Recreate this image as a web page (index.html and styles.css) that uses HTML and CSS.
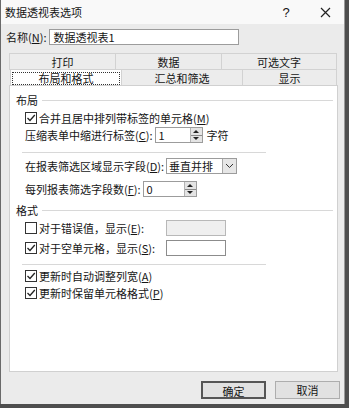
FILE: index.html
```html
<!DOCTYPE html>
<html lang="zh-CN">
<head>
    <meta charset="UTF-8">
    <title>数据透视表选项</title>
    <link rel="stylesheet" href="styles.css">
</head>
<body>
    <div class="dialog">
        <div class="titlebar">
            <span class="title">数据透视表选项</span>
            <span class="tb-btn help">?</span>
            <span class="tb-btn close">
                <svg width="11" height="11" viewBox="0 0 11 11"><path d="M1 1L10 10M10 1L1 10" stroke="#222" stroke-width="1.2" fill="none"/></svg>
            </span>
        </div>

        <div class="name-row">
            <label>名称(<u>N</u>):</label>
            <input class="text-input name-input" type="text" value="数据透视表1">
        </div>

        <div class="tabs">
            <div class="tab-row top">
                <div class="tab">打印</div>
                <div class="tab">数据</div>
                <div class="tab">可选文字</div>
            </div>
            <div class="tab-row bottom">
                <div class="tab selected"><span class="focus">布局和格式</span></div>
                <div class="tab">汇总和筛选</div>
                <div class="tab">显示</div>
            </div>
        </div>

        <div class="panel">
            <div class="group-head">布局</div>

            <div class="row r1">
                <span class="check on"><svg width="10" height="10" viewBox="0 0 10 10"><path d="M1.5 5L4 7.5L8.8 2" stroke="#222" stroke-width="1.3" fill="none"/></svg></span>
                <span>合并且居中排列带标签的单元格(<u>M</u>)</span>
            </div>
            <div class="row r2">
                <span>压缩表单中缩进行标签(<u>C</u>):</span>
                <span class="spin-field f-indent">
                    <span class="spin-value">1</span>
                    <span class="spin"><i class="up"></i><i class="down"></i></span>
                </span>
                <span class="unit">字符</span>
            </div>

            <div class="sep s1"></div>

            <div class="row r3">
                <span>在报表筛选区域显示字段(<u>D</u>):</span>
                <span class="select">
                    <span class="select-value">垂直并排</span>
                    <span class="drop"><svg width="9" height="6" viewBox="0 0 9 6"><path d="M1 1L4.5 4.5L8 1" stroke="#333" stroke-width="1" fill="none"/></svg></span>
                </span>
            </div>
            <div class="row r4">
                <span>每列报表筛选字段数(<u>F</u>):</span>
                <span class="spin-field f-count">
                    <span class="spin-value">0</span>
                    <span class="spin"><i class="up"></i><i class="down"></i></span>
                </span>
            </div>

            <div class="group-head g2">格式</div>

            <div class="row r5">
                <span class="check"></span>
                <span>对于错误值，显示(<u>E</u>):</span>
                <span class="box disabled"></span>
            </div>
            <div class="row r6">
                <span class="check on"><svg width="10" height="10" viewBox="0 0 10 10"><path d="M1.5 5L4 7.5L8.8 2" stroke="#222" stroke-width="1.3" fill="none"/></svg></span>
                <span>对于空单元格，显示(<u>S</u>):</span>
                <span class="box"></span>
            </div>

            <div class="sep s2"></div>

            <div class="row r7">
                <span class="check on"><svg width="10" height="10" viewBox="0 0 10 10"><path d="M1.5 5L4 7.5L8.8 2" stroke="#222" stroke-width="1.3" fill="none"/></svg></span>
                <span>更新时自动调整列宽(<u>A</u>)</span>
            </div>
            <div class="row r8">
                <span class="check on"><svg width="10" height="10" viewBox="0 0 10 10"><path d="M1.5 5L4 7.5L8.8 2" stroke="#222" stroke-width="1.3" fill="none"/></svg></span>
                <span>更新时保留单元格格式(<u>P</u>)</span>
            </div>
        </div>

        <div class="buttons">
            <button class="btn default">确定</button>
            <button class="btn">取消</button>
        </div>
    </div>
</body>
</html>
```

FILE: styles.css
```css
body {
    margin: 0;
    background-color: #4e4e4e;
    font-family: "Noto Sans CJK SC", sans-serif;
    font-size: 11px;
    color: #151515;
    height: 408px;
    overflow: hidden;
}

u {
    text-decoration: underline;
    text-underline-offset: 1px;
}

/* Dialog frame */
.dialog {
    width: 345px;
    height: 404px;
    background-color: #ebebeb;
    border-left: 1px solid #6a6a6a;
    border-right: 1px solid #9a9a9a;
    box-sizing: border-box;
    display: flex;
    flex-direction: column;
}

.titlebar {
    height: 24px;
    background-color: #f9f9f9;
    display: flex;
    align-items: center;
    padding-left: 4px;
    padding-right: 4px;
}

.title {
    font-size: 11px;
}

.tb-btn {
    display: flex;
    align-items: center;
    justify-content: center;
    height: 24px;
}

.help {
    margin-left: auto;
    width: 20px;
    font-family: "Liberation Sans", sans-serif;
    font-size: 13px;
}

.close {
    width: 30px;
    margin-left: 14px;
}

/* Name row */
.name-row {
    display: flex;
    align-items: center;
    margin-top: 5px;
    padding-left: 5px;
    height: 16px;
}

.text-input {
    font: inherit;
    color: inherit;
    border: 1px solid #9c9c9c;
    background-color: #fff;
    box-sizing: border-box;
    height: 16px;
    padding: 0 3px;
    margin: 0;
}

.name-input {
    width: 190px;
    margin-left: 3px;
}

/* Tabs */
.tabs {
    margin-top: 8px;
    margin-left: 8px;
    width: 328px;
}

.tab-row {
    display: grid;
    height: 16px;
}

.tab-row.top {
    grid-template-columns: 107px 106px 1fr;
}

.tab-row.bottom {
    grid-template-columns: 113px 121px 1fr;
}

.tab {
    display: flex;
    align-items: center;
    justify-content: center;
    background-color: #ececec;
    border: 1px solid #d2d2d2;
    border-left: none;
    border-bottom: none;
    box-sizing: border-box;
}

.tab:first-child {
    border-left: 1px solid #d2d2d2;
}

.tab.selected {
    background-color: #fff;
    margin-left: 1px;
}

.focus {
    display: flex;
    align-items: center;
    justify-content: center;
    width: 108px;
    height: 13px;
    border: 1px dotted #333;
    box-sizing: border-box;
}

/* Panel */
.panel {
    margin-left: 8px;
    width: 329px;
    height: 287px;
    background-color: #fff;
    border: 1px solid #d0d0d0;
    box-sizing: border-box;
    padding: 7px 4px 0 6px;
}

.group-head {
    display: flex;
    align-items: center;
    height: 14px;
}

.group-head::after {
    content: "";
    flex: 1;
    height: 1px;
    background-color: #d8d8d8;
    margin-left: 4px;
}

.g2 { margin-top: 6px; }

.row {
    display: flex;
    align-items: center;
    margin-left: 9px;
    height: 14px;
}

.r1 { margin-top: 4px; }
.r2 { margin-top: 2px; height: 16px; }
.r3 { margin-top: 5px; height: 16px; }
.r4 { margin-top: 7px; height: 16px; }
.r5 { margin-top: 3px; height: 16px; }
.r6 { margin-top: 4px; height: 16px; }
.r7 { margin-top: 4px; }
.r8 { margin-top: 3px; }

.sep {
    height: 1px;
    background-color: #d8d8d8;
    margin-left: 6px;
    width: 244px;
}

.s1 { margin-top: 9px; }
.s2 { margin-top: 8px; }

/* Checkbox */
.check {
    width: 12px;
    height: 12px;
    border: 1px solid #333;
    box-sizing: border-box;
    background-color: #fff;
    display: flex;
    align-items: center;
    justify-content: center;
    margin-right: 2px;
}

/* Spin fields */
.spin-field {
    display: flex;
    height: 16px;
    border: 1px solid #9c9c9c;
    box-sizing: border-box;
    margin-left: 2px;
}

.f-indent { width: 48px; }
.f-count { width: 54px; }

.spin-value {
    flex: 1;
    padding-left: 3px;
    line-height: 14px;
}

.spin {
    width: 11px;
    display: flex;
    flex-direction: column;
    border-left: 1px solid #b4b4b4;
    background-color: #e4e4e4;
}

.spin i {
    flex: 1;
    display: flex;
    align-items: center;
    justify-content: center;
}

.spin i.up {
    border-bottom: 1px solid #8a8a8a;
}

.spin i.up::before,
.spin i.down::before {
    content: "";
    border-left: 3px solid transparent;
    border-right: 3px solid transparent;
}

.spin i.up::before {
    border-bottom: 3px solid #222;
}

.spin i.down::before {
    border-top: 3px solid #222;
}

.unit {
    margin-left: 4px;
}

/* Select */
.select {
    display: flex;
    width: 71px;
    height: 16px;
    border: 1px solid #9c9c9c;
    box-sizing: border-box;
    margin-left: 2px;
}

.select-value {
    flex: 1;
    padding-left: 2px;
    line-height: 14px;
}

.drop {
    width: 13px;
    display: flex;
    align-items: center;
    justify-content: center;
    background-color: #e6e6e6;
    border-left: 1px solid #a8a8a8;
}

/* Plain boxes */
.box {
    width: 60px;
    height: 16px;
    border: 1px solid #8c8c8c;
    box-sizing: border-box;
    background-color: #fff;
    margin-left: auto;
    margin-right: 107px;
}

.box.disabled {
    background-color: #efefef;
    border-color: #b8b8b8;
}

/* Buttons */
.buttons {
    display: flex;
    justify-content: flex-end;
    gap: 9px;
    margin-top: 9px;
    padding-right: 4px;
}

.btn {
    width: 65px;
    height: 18px;
    font: inherit;
    color: inherit;
    background-color: #e1e1e1;
    border: 1px solid #adadad;
    padding: 0;
    margin: 0;
}

.btn.default {
    border: 2px solid #555;
}
```
